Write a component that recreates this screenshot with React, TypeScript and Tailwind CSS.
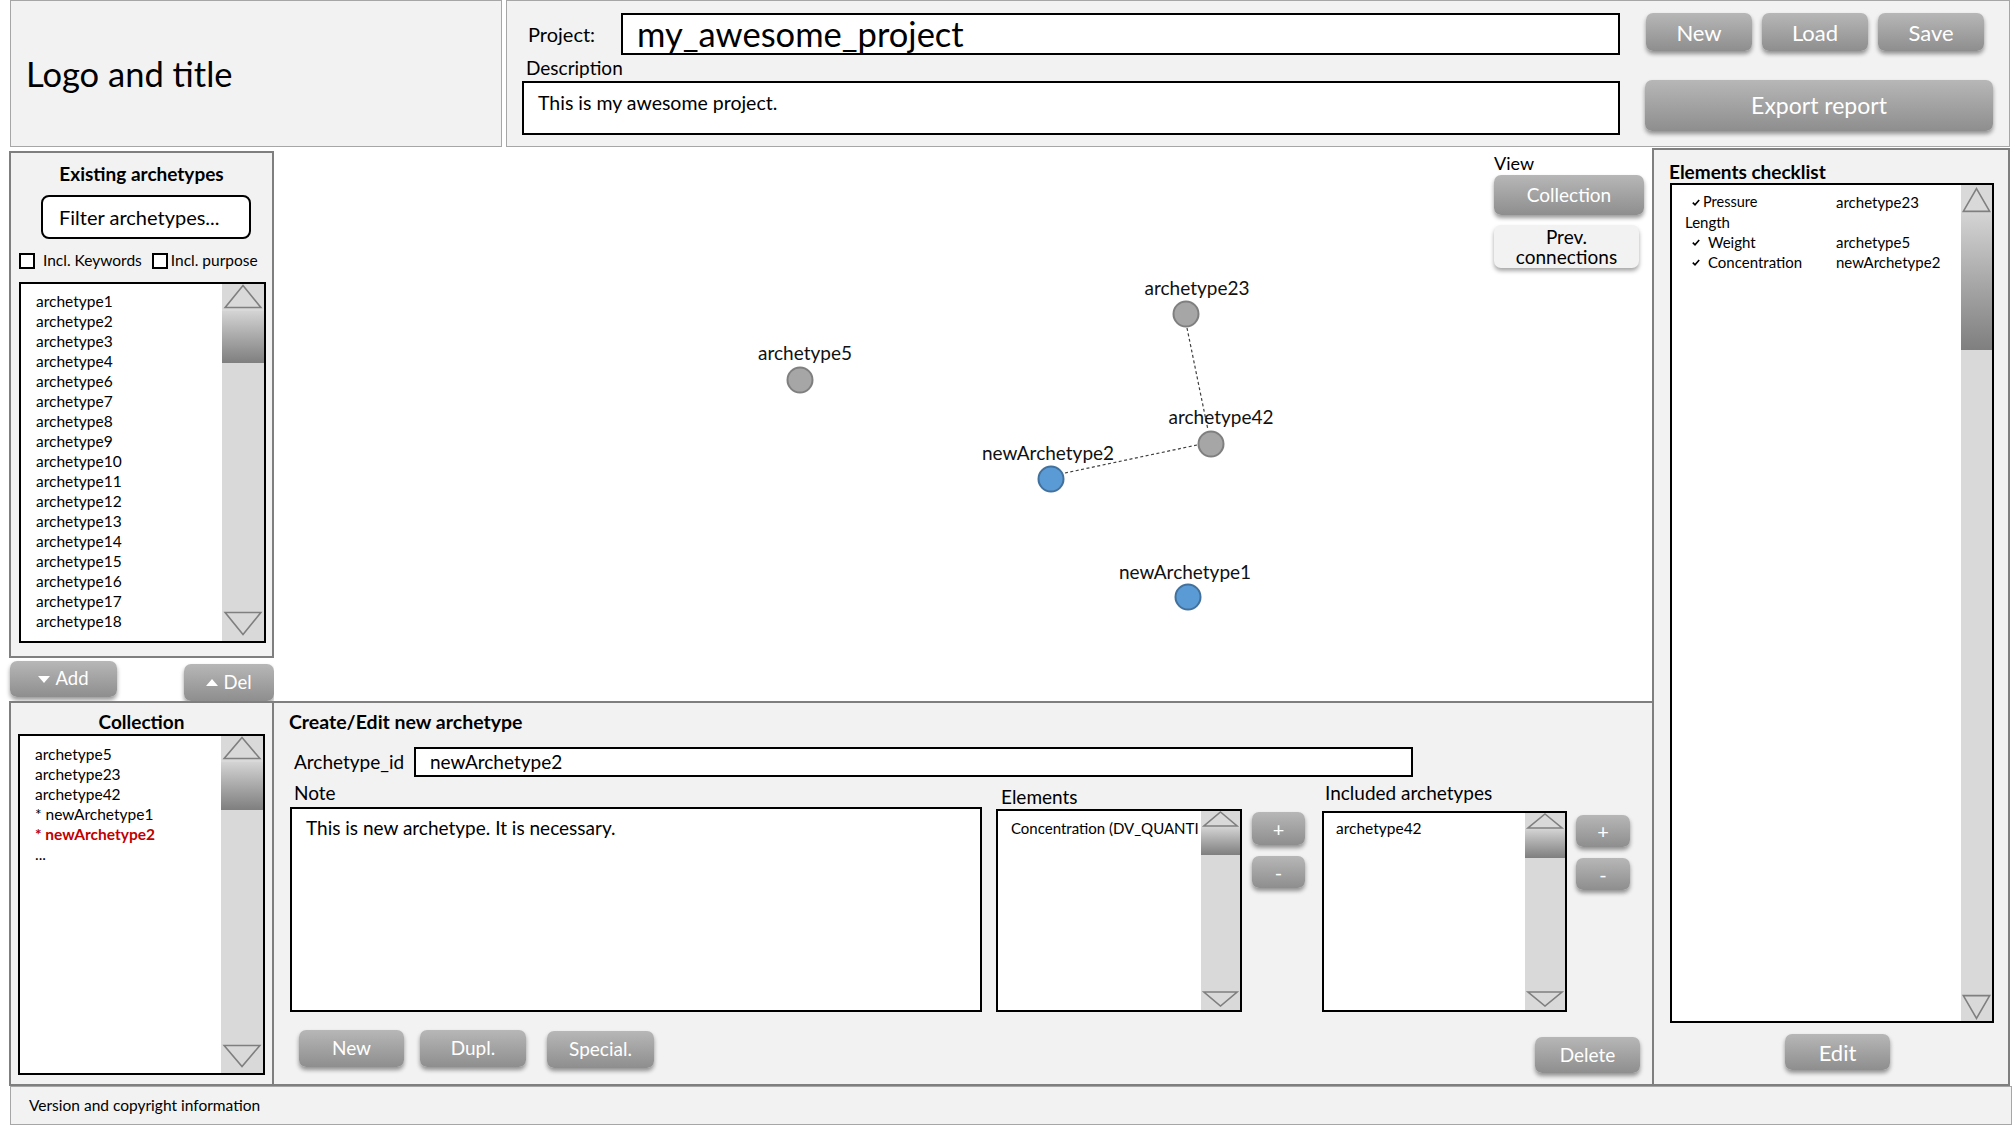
import React from 'react';
import clsx from 'clsx';

function GrayButton({ className, children }: { className?: string; children: React.ReactNode }) {
  return (
    <div
      className={clsx(
        'flex shrink-0 items-center justify-center rounded-[7px] bg-linear-to-b from-[#b7b7b7] to-[#8e8e8e] text-white shadow-[0_3px_4px_rgba(0,0,0,0.4)]',
        className
      )}
    >
      {children}
    </div>
  );
}

function Arrow({ down, className }: { down?: boolean; className?: string }) {
  return (
    <svg viewBox="0 0 40 24" preserveAspectRatio="none" className={clsx('block w-full shrink-0', className)}>
      <polygon
        points={down ? '3,1.5 37,1.5 20,22.5' : '20,1.5 37,22.5 3,22.5'}
        fill="none"
        stroke="#7f7f7f"
        strokeWidth="1.6"
        vectorEffect="non-scaling-stroke"
      />
    </svg>
  );
}

function ScrollBar({ className, arrow, thumb, down }: { className: string; arrow: string; thumb: string; down?: string }) {
  return (
    <div className={clsx('flex h-full shrink-0 flex-col bg-[#d9d9d9]', className)}>
      <Arrow className={arrow} />
      <div className={clsx('shrink-0 bg-linear-to-b from-[#d4d4d4] to-[#7f7f7f]', thumb)} />
      <div className="flex-1" />
      <Arrow down className={clsx(arrow, down)} />
    </div>
  );
}

function Check() {
  return (
    <svg width="8" height="7" viewBox="0 0 8 7" className="shrink-0">
      <path d="M0.8 3.6 L3 5.8 L7.2 0.9" fill="none" stroke="#000" strokeWidth="1.6" />
    </svg>
  );
}

function Tri({ down }: { down?: boolean }) {
  return (
    <svg width="12" height="7" viewBox="0 0 12 7" className="mr-[5px]">
      <polygon points={down ? '0,0 12,0 6,7' : '6,0 12,7 0,7'} fill="#fff" />
    </svg>
  );
}

const archetypes = [1, 2, 3, 4, 6, 7, 8, 9, 10, 11, 12, 13, 14, 15, 16, 17, 18];

type Node = { name: string; x: number; y: number; lx: number; ly: number; blue?: boolean };

const nodes: Node[] = [
  { name: 'archetype5', x: 526, y: 232, lx: 531, ly: 205 },
  { name: 'archetype23', x: 912, y: 166, lx: 923, ly: 140 },
  { name: 'archetype42', x: 937, y: 296, lx: 947, ly: 269 },
  { name: 'newArchetype2', x: 777, y: 331, lx: 774, ly: 305, blue: true },
  { name: 'newArchetype1', x: 914, y: 449, lx: 911, ly: 424, blue: true },
];

function Graph() {
  return (
    <svg className="absolute inset-0" width="1378" height="553" viewBox="0 0 1378 553">
      <line x1="913" y1="180" x2="934" y2="282" stroke="#404040" strokeWidth="1.2" strokeDasharray="3 2.5" />
      <line x1="923" y1="297" x2="791" y2="325" stroke="#404040" strokeWidth="1.2" strokeDasharray="3 2.5" />
      {nodes.map((n) => (
        <g key={n.name}>
          <circle
            cx={n.x}
            cy={n.y}
            r="12.5"
            fill={n.blue ? '#5b9bd5' : '#a6a6a6'}
            stroke={n.blue ? '#41719c' : '#7f7f7f'}
            strokeWidth="2"
          />
          <text
            x={n.lx}
            y={n.ly + 7}
            textAnchor="middle"
            fontFamily="Lato, sans-serif"
            fontSize="19"
            fill="#111"
          >
            {n.name}
          </text>
        </g>
      ))}
    </svg>
  );
}

export default function App() {
  return (
    <div className="flex h-[1127px] w-[2013px] flex-col overflow-hidden bg-white font-['Lato',sans-serif] text-black">
      {/* Header */}
      <div className="flex h-[148px] items-start gap-[4px] pl-[10px]">
        <div className="flex h-[147px] w-[492px] items-center border border-[#a6a6a6] bg-[#f2f2f2] pl-[15px] text-[34.5px]">
          Logo and title
        </div>
        <div className="flex h-[147px] w-[1504px] border border-[#a6a6a6] bg-[#f2f2f2]">
          <div className="ml-[15px] mt-[12px] flex w-[1098px] flex-col">
            <div className="flex h-[42px] items-center">
              <span className="w-[99px] pl-[6px] text-[20px]">Project:</span>
              <div className="flex h-full flex-1 items-center border-2 border-black bg-white pl-[14px] text-[34.5px]">
                my_awesome_project
              </div>
            </div>
            <div className="pl-[4px] text-[19px] leading-[26px]">Description</div>
            <div className="h-[54px] border-2 border-black bg-white pl-[14px] pt-[8px] text-[19.5px] leading-[24px]">
              This is my awesome project.
            </div>
          </div>
          <div className="ml-[25px] mt-[12px] flex flex-col">
            <div className="ml-[1px] flex gap-[10px]">
              <GrayButton className="h-[38px] w-[106px] text-[22px]">New</GrayButton>
              <GrayButton className="h-[38px] w-[106px] text-[22px]">Load</GrayButton>
              <GrayButton className="h-[38px] w-[106px] text-[22px]">Save</GrayButton>
            </div>
            <GrayButton className="mt-[29px] h-[51px] w-[348px] text-[23px]">Export report</GrayButton>
          </div>
        </div>
      </div>

      {/* Body */}
      <div className="flex h-[938px]">
        {/* Left column */}
        <div className="flex w-[274px] flex-col pl-[9px]">
          <div className="mt-[3px] h-[507px] border-2 border-[#7f7f7f] bg-[#f2f2f2]">
            <div className="pt-[9px] text-center text-[19px] font-bold leading-[24px]">Existing archetypes</div>
            <div className="ml-[30px] mt-[9px] flex h-[44px] w-[210px] items-center rounded-[8px] border-2 border-black bg-white pl-[16px] text-[20px]">
              Filter archetypes...
            </div>
            <div className="ml-[8px] mt-[12px] flex h-[20px] items-center text-[15.5px]">
              <span className="h-[16px] w-[16px] border-2 border-black bg-white" />
              <span className="ml-[8px]">Incl. Keywords</span>
              <span className="ml-[10px] h-[16px] w-[16px] border-2 border-black bg-white" />
              <span className="ml-[3px]">Incl. purpose</span>
            </div>
            <div className="ml-[8px] mt-[11px] flex h-[361px] w-[247px] border-2 border-black bg-white">
              <div className="flex-1 pl-[15px] pt-[7px] text-[15.5px] leading-[20px]">
                {archetypes.map((n) => (
                  <div key={n}>archetype{n}</div>
                ))}
              </div>
              <ScrollBar className="w-[42px]" arrow="h-[25px]" thumb="mt-[2px] h-[52px]" down="mb-[5px]" />
            </div>
          </div>
          <div className="flex h-[43px] items-start justify-between">
            <GrayButton className="ml-[1px] mt-[3px] h-[36px] w-[107px] text-[18.5px]">
              <Tri down />
              Add
            </GrayButton>
            <GrayButton className="mt-[6px] h-[37px] w-[90px] text-[18.5px]">
              <Tri />
              Del
            </GrayButton>
          </div>
          <div className="h-[385px] border-2 border-[#7f7f7f] bg-[#f2f2f2]">
            <div className="pt-[7px] text-center text-[19px] font-bold leading-[24px]">Collection</div>
            <div className="ml-[7px] flex h-[341px] w-[247px] border-2 border-black bg-white">
              <div className="flex-1 pl-[15px] pt-[8px] text-[15.5px] leading-[20px]">
                <div>archetype5</div>
                <div>archetype23</div>
                <div>archetype42</div>
                <div>* newArchetype1</div>
                <div className="font-bold text-[#c00000]">* newArchetype2</div>
                <div>...</div>
              </div>
              <ScrollBar className="w-[42px]" arrow="h-[24px]" thumb="mt-[2px] h-[48px]" down="mb-[5px]" />
            </div>
          </div>
        </div>

        {/* Middle column */}
        <div className="flex w-[1378px] flex-col">
          <div className="relative flex h-[553px] justify-end bg-white pr-[8px] pt-[4px]">
            <Graph />
            <div className="relative flex w-[150px] flex-col">
              <div className="text-[18px] leading-[22px]">View</div>
              <GrayButton className="mt-[1px] h-[40px] w-[150px] text-[19px]">Collection</GrayButton>
              <div className="mt-[10px] flex h-[43px] w-[145px] flex-col items-center justify-center rounded-[7px] bg-[#f2f2f2] text-[19px] leading-[20px] shadow-[0_3px_4px_rgba(0,0,0,0.35)]">
                <span>Prev.</span>
                <span>connections</span>
              </div>
            </div>
          </div>

          <div className="flex h-[385px] flex-col border-y-2 border-[#7f7f7f] bg-[#f2f2f2]">
            <div className="pl-[15px] pt-[7px] text-[19.5px] font-bold leading-[24px]">Create/Edit new archetype</div>
            <div className="mt-[13px] flex h-[30px] items-center pl-[20px]">
              <span className="w-[120px] text-[19px]">Archetype_id</span>
              <div className="flex h-full w-[999px] items-center border-2 border-black bg-white pl-[14px] text-[19px]">
                newArchetype2
              </div>
            </div>
            <div className="mt-[2px] flex items-start pl-[16px]">
              <div className="w-[692px]">
                <div className="pl-[4px] text-[19px] leading-[28px]">Note</div>
                <div className="h-[205px] border-2 border-black bg-white pl-[14px] pt-[7px] text-[19px] leading-[24px]">
                  This is new archetype. It is necessary.
                </div>
              </div>
              <div className="ml-[14px] w-[246px]">
                <div className="mt-[5px] pl-[5px] text-[19px] leading-[25px]">Elements</div>
                <div className="flex h-[203px] border-2 border-black bg-white">
                  <div className="flex-1 overflow-hidden whitespace-nowrap pl-[13px] pt-[7px] text-[15px] leading-[20px]">
                    Concentration (DV_QUANTI
                  </div>
                  <ScrollBar className="w-[39px]" arrow="h-[16px]" thumb="h-[28px]" down="mb-[3px]" />
                </div>
              </div>
              <div className="ml-[10px] mt-[33px] flex flex-col gap-[11px]">
                <GrayButton className="h-[33px] w-[53px] text-[20px]">+</GrayButton>
                <GrayButton className="h-[32px] w-[53px] text-[20px]">-</GrayButton>
              </div>
              <div className="ml-[17px] w-[245px]">
                <div className="mt-[2px] pl-[3px] text-[19px] leading-[24px]">Included archetypes</div>
                <div className="mt-[6px] flex h-[201px] border-2 border-black bg-white">
                  <div className="flex-1 pl-[12px] pt-[5px] text-[15.5px] leading-[20px]">archetype42</div>
                  <ScrollBar className="w-[40px]" arrow="h-[16px]" thumb="h-[29px]" down="mb-[3px]" />
                </div>
              </div>
              <div className="ml-[9px] mt-[36px] flex flex-col gap-[11px]">
                <GrayButton className="h-[32px] w-[54px] text-[20px]">+</GrayButton>
                <GrayButton className="h-[32px] w-[54px] text-[20px]">-</GrayButton>
              </div>
            </div>
            <div className="mt-[18px] flex items-start pl-[25px] pr-[12px]">
              <GrayButton className="h-[37px] w-[105px] text-[19px]">New</GrayButton>
              <GrayButton className="ml-[16px] h-[37px] w-[106px] text-[19px]">Dupl.</GrayButton>
              <GrayButton className="ml-[21px] mt-[1px] h-[37px] w-[107px] text-[19px]">Special.</GrayButton>
              <GrayButton className="ml-auto mt-[7px] h-[36px] w-[105px] text-[19px]">Delete</GrayButton>
            </div>
          </div>
        </div>

        {/* Right column */}
        <div className="flex w-[358px] flex-col border-2 border-[#7f7f7f] bg-[#f2f2f2]">
          <div className="pl-[15px] pt-[11px] text-[19px] font-bold leading-[22px]">Elements checklist</div>
          <div className="ml-[16px] flex h-[840px] w-[324px] border-2 border-black bg-white">
            <div className="flex-1 pt-[7px] text-[15px] leading-[20px]">
              <div className="grid grid-cols-[164px_1fr]">
                <div className="flex items-center pl-[20px]">
                  <Check />
                  <span className="ml-[3px] text-[14.5px]">Pressure</span>
                </div>
                <span>archetype23</span>
                <div className="pl-[13px]">Length</div>
                <span />
                <div className="flex items-center pl-[20px]">
                  <Check />
                  <span className="ml-[8px]">Weight</span>
                </div>
                <span>archetype5</span>
                <div className="flex items-center pl-[20px]">
                  <Check />
                  <span className="ml-[8px]">Concentration</span>
                </div>
                <span>newArchetype2</span>
              </div>
            </div>
            <ScrollBar className="w-[31px]" arrow="mt-[2px] h-[26px]" thumb="h-[137px]" down="mb-[1px]" />
          </div>
          <GrayButton className="ml-[131px] mt-[11px] h-[36px] w-[105px] text-[22px]">Edit</GrayButton>
        </div>
      </div>

      {/* Footer */}
      <div className="ml-[10px] flex h-[39px] w-[2002px] items-center border border-[#a6a6a6] bg-[#f2f2f2] pl-[18px] text-[15.5px]">
        Version and copyright information
      </div>
    </div>
  );
}
